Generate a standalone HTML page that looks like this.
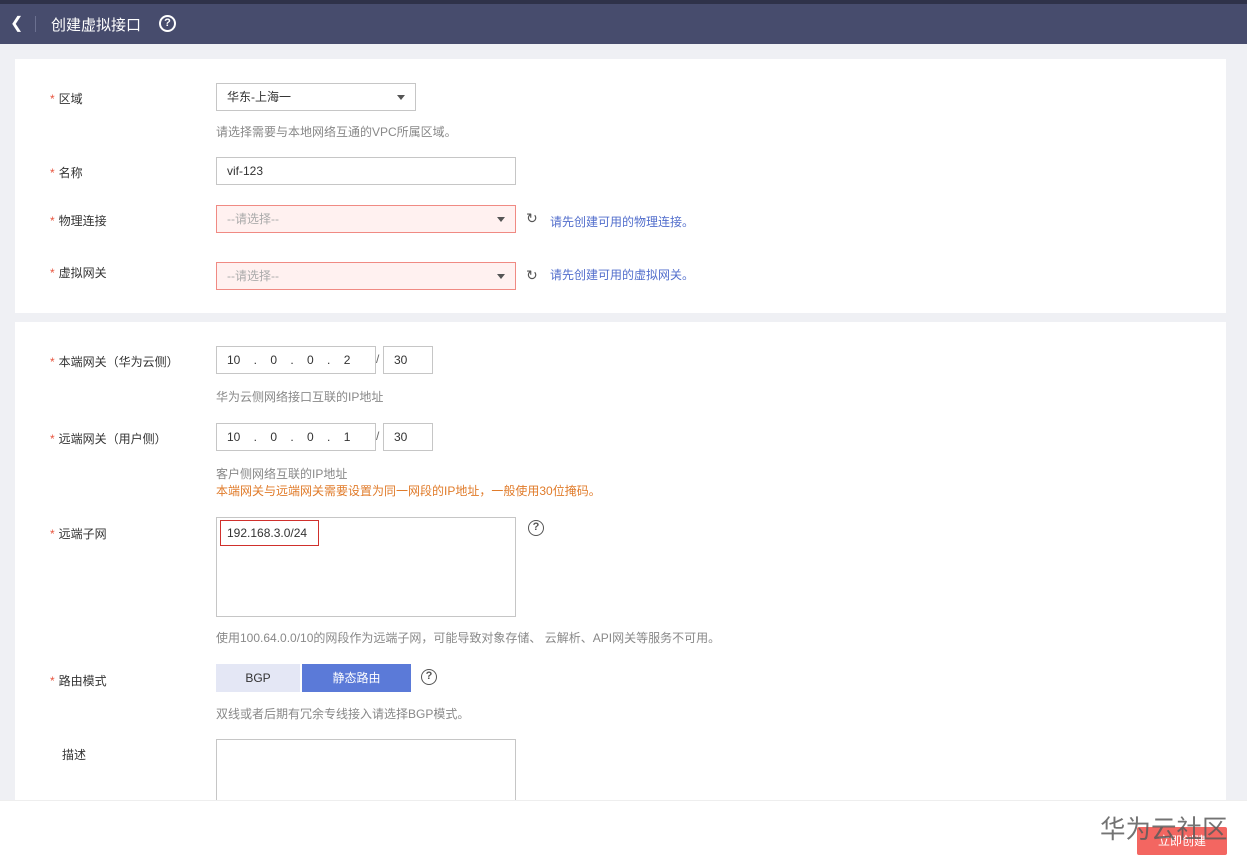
<!DOCTYPE html>
<html><head><meta charset="utf-8"><style>
*{margin:0;padding:0;box-sizing:border-box}
body{width:1247px;height:867px;overflow:hidden;background:#eff0f4;font-family:"Liberation Sans","Noto Sans CJK SC",sans-serif;font-size:12px;color:#333;position:relative}
.a{position:absolute}
.hdr{left:0;top:0;width:1247px;height:44px;background:#474c6d;border-top:4px solid #2f3249}
.card{background:#fff;left:15px;width:1211px}
.lbl{left:50px;color:#333}
.lbl b{color:#e8553f;font-weight:normal;margin-right:4px}
.inp{border:1px solid #c6c6c6;background:#fff;height:28px;line-height:26px;padding-left:10px}
.err{border-color:#f08a83;background:#fff1f0;color:#aaa}
.hint{left:216px;color:#888}
.tri{position:absolute;right:10px;top:11px;border:4px solid transparent;border-top:5px solid #555}
.link{color:#526ecc}
.q{width:16px;height:16px;border:1.5px solid #555;border-radius:50%;text-align:center;line-height:13px;font-size:11px;font-weight:bold;color:#555}
</style></head><body>
<div class="a hdr"></div>
<div class="a" style="left:10px;top:13px;color:#fff;font-size:16px">&#10094;</div>
<div class="a" style="left:35px;top:16px;width:1px;height:16px;background:#6b7090"></div>
<div class="a" style="left:51px;top:14px;color:#fff;font-size:15px">创建虚拟接口</div>
<div class="a" style="left:159px;top:15px;width:17px;height:17px;border:2px solid #fff;border-radius:50%;color:#fff;font-size:11px;font-weight:bold;text-align:center;line-height:13px">?</div>

<div class="a card" style="top:59px;height:254px"></div>
<div class="a lbl" style="top:90px"><b>*</b>区域</div>
<div class="a inp" style="left:216px;top:83px;width:200px">华东-上海一<span class="tri"></span></div>
<div class="a hint" style="top:123px">请选择需要与本地网络互通的VPC所属区域。</div>
<div class="a lbl" style="top:164px"><b>*</b>名称</div>
<div class="a inp" style="left:216px;top:157px;width:300px">vif-123</div>
<div class="a lbl" style="top:212px"><b>*</b>物理连接</div>
<div class="a inp err" style="left:216px;top:205px;width:300px">--请选择--<span class="tri"></span></div>
<div class="a" style="left:526px;top:210px;font-size:14px;color:#555">&#8635;</div>
<div class="a link" style="left:550px;top:213px">请先创建可用的物理连接。</div>
<div class="a lbl" style="top:264px"><b>*</b>虚拟网关</div>
<div class="a inp err" style="left:216px;top:262px;width:300px">--请选择--<span class="tri"></span></div>
<div class="a" style="left:526px;top:267px;font-size:14px;color:#555">&#8635;</div>
<div class="a link" style="left:550px;top:266px">请先创建可用的虚拟网关。</div>

<div class="a card" style="top:322px;height:478px"></div>
<div class="a lbl" style="top:353px"><b>*</b>本端网关（华为云侧）</div>
<div class="a inp" style="left:216px;top:346px;width:160px;word-spacing:0">10 &nbsp;&nbsp;&nbsp;.&nbsp;&nbsp;&nbsp; 0 &nbsp;&nbsp;&nbsp;.&nbsp;&nbsp;&nbsp; 0 &nbsp;&nbsp;&nbsp;.&nbsp;&nbsp;&nbsp; 2</div>
<div class="a" style="left:376px;top:352px;color:#666">/</div>
<div class="a inp" style="left:383px;top:346px;width:50px">30</div>
<div class="a hint" style="top:388px">华为云侧网络接口互联的IP地址</div>
<div class="a lbl" style="top:430px"><b>*</b>远端网关（用户侧）</div>
<div class="a inp" style="left:216px;top:423px;width:160px">10 &nbsp;&nbsp;&nbsp;.&nbsp;&nbsp;&nbsp; 0 &nbsp;&nbsp;&nbsp;.&nbsp;&nbsp;&nbsp; 0 &nbsp;&nbsp;&nbsp;.&nbsp;&nbsp;&nbsp; 1</div>
<div class="a" style="left:376px;top:429px;color:#666">/</div>
<div class="a inp" style="left:383px;top:423px;width:50px">30</div>
<div class="a hint" style="top:465px">客户侧网络互联的IP地址</div>
<div class="a" style="left:216px;top:482px;color:#e07b2a">本端网关与远端网关需要设置为同一网段的IP地址，一般使用30位掩码。</div>
<div class="a lbl" style="top:525px"><b>*</b>远端子网</div>
<div class="a" style="left:216px;top:517px;width:300px;height:100px;border:1px solid #c6c6c6"></div>
<div class="a" style="left:220px;top:520px;width:99px;height:26px;border:1.5px solid #d0302c;padding:5px 0 0 6px">192.168.3.0/24</div>
<div class="a q" style="left:528px;top:520px">?</div>
<div class="a hint" style="top:629px">使用100.64.0.0/10的网段作为远端子网，可能导致对象存储、 云解析、API网关等服务不可用。</div>
<div class="a lbl" style="top:672px"><b>*</b>路由模式</div>
<div class="a" style="left:216px;top:664px;width:84px;height:28px;background:#e4e7f5;text-align:center;line-height:28px">BGP</div>
<div class="a" style="left:302px;top:664px;width:109px;height:28px;background:#5b7ad8;color:#fff;text-align:center;line-height:28px">静态路由</div>
<div class="a q" style="left:421px;top:669px">?</div>
<div class="a hint" style="top:705px">双线或者后期有冗余专线接入请选择BGP模式。</div>
<div class="a" style="left:62px;top:746px">描述</div>
<div class="a" style="left:216px;top:739px;width:300px;height:70px;border:1px solid #c6c6c6"></div>

<div class="a" style="left:0;top:800px;width:1247px;height:67px;background:#fff;border-top:1px solid #eee"></div>
<div class="a" style="left:1137px;top:827px;width:90px;height:28px;background:#f36661;border-radius:2px;color:#fff;text-align:center;line-height:28px">立即创建</div>
<div class="a" style="left:1100px;top:809px;font-size:25.5px;color:rgba(90,90,90,.85)">华为云社区</div>
</body></html>
